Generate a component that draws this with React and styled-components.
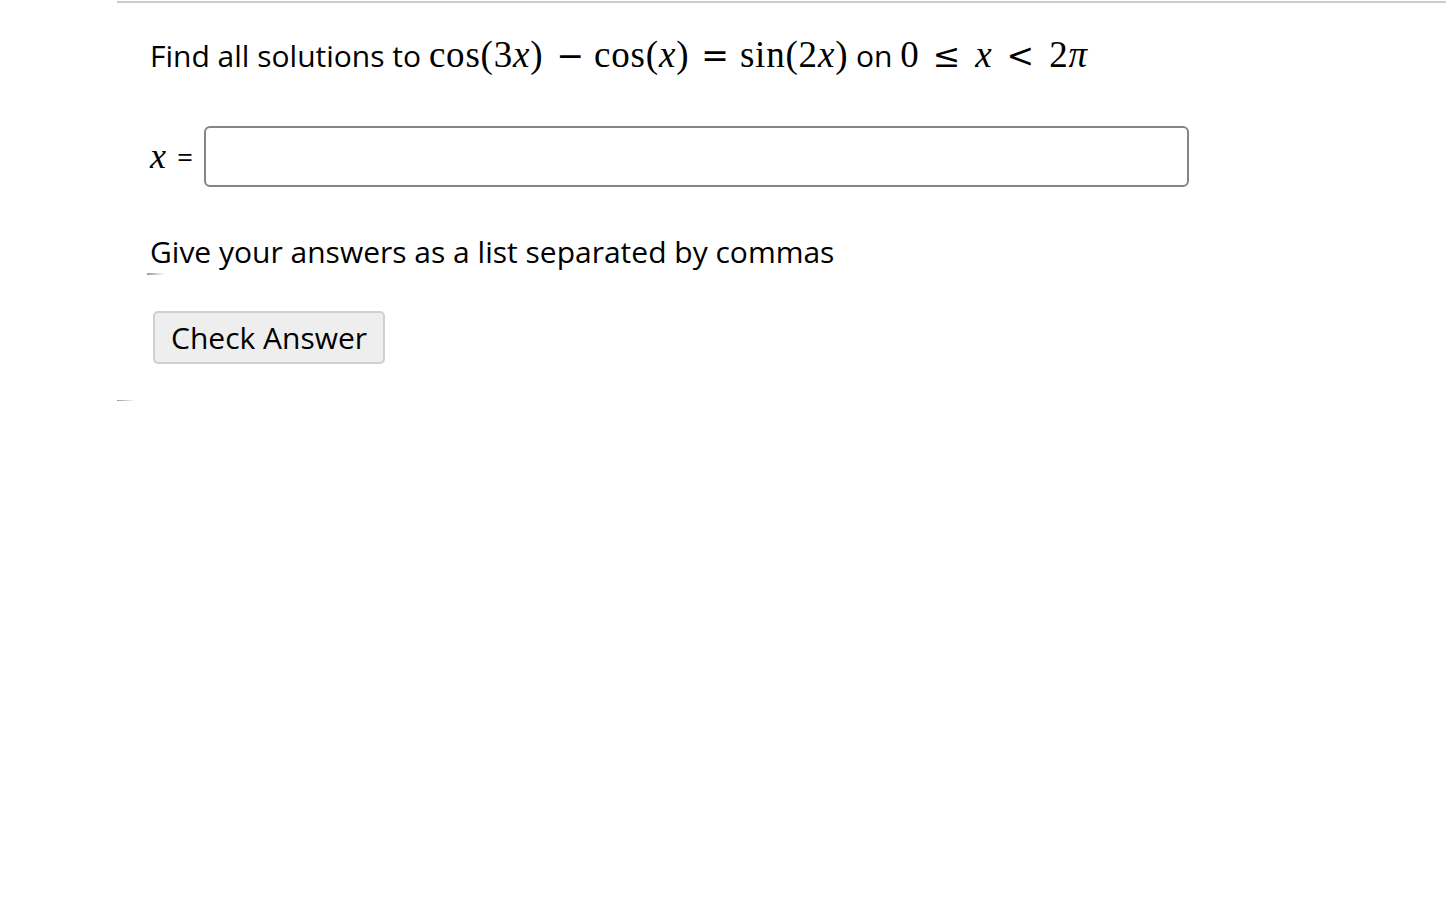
import React from "react";
import styled, { createGlobalStyle } from "styled-components";

const Global = createGlobalStyle`
  html, body { margin: 0; padding: 0; background: #fff; }
  body { font-family: "Open Sans", "Noto Sans", sans-serif; color: #000; }
`;

const Page = styled.div`
  margin-left: 117px;
  border-top: 2px solid #cdcdcd;
  margin-top: 1px;
  padding: 0 0 0 33px;
  position: relative;
  height: 398px;
`;

const Prompt = styled.p`
  margin: 0;
  padding-top: 32px;
  font-size: 30px;
  line-height: 40px;
  white-space: nowrap;
`;

const Math = styled.span`
  font-family: "Liberation Serif", "DejaVu Serif", serif;
  font-size: 37px;
  letter-spacing: 0.8px;
`;

const Var = styled.i`
  font-family: "Liberation Serif", "DejaVu Serif", serif;
  font-style: italic;
`;

const Op = styled.span`
  display: inline-block;
  font-family: "DejaVu Serif", "Liberation Serif", serif;
  font-size: 33px;
  letter-spacing: 0;
  margin: 0 ${(p) => p.$r}px 0 ${(p) => p.$l}px;
`;

const Row = styled.div`
  display: flex;
  align-items: center;
  margin-top: 49px;
  height: 62px;
`;

const Label = styled.label`
  font-size: 28px;
  width: 54px;
  flex: none;
  display: flex;
  align-items: center;
`;

const LabelVar = styled.i`
  font-family: "Liberation Serif", "DejaVu Serif", serif;
  font-size: 36px;
  font-style: italic;
  margin-right: 11px;
`;

const Input = styled.input`
  width: 985px;
  height: 61px;
  box-sizing: border-box;
  border: 2px solid #858585;
  border-radius: 6px;
  background: #fff;
  font-size: 26px;
  padding: 0 12px;
  font-family: "Open Sans", sans-serif;
`;

const Hint = styled.p`
  margin: 45px 0 0;
  font-size: 30px;
  line-height: 40px;
`;

const Fade = styled.div`
  position: absolute;
  height: 2px;
  width: 18px;
  background: linear-gradient(to right, #999, rgba(200, 200, 200, 0));
  left: ${(p) => p.$left}px;
  top: ${(p) => p.$top}px;
`;

const Button = styled.button`
  margin: 39px 0 0 3px;
  height: 53px;
  padding: 0 16px;
  font-family: "Open Sans", sans-serif;
  font-size: 30px;
  color: #000;
  background: #eeeeee;
  border: 2px solid #d0d0d0;
  border-radius: 5px;
`;

export default function App() {
  return (
    <>
      <Global />
      <Page>
        <Prompt>
          Find all solutions to{" "}
          <Math>
            cos(3<Var>x</Var>)<Op $l={13} $r={10}>−</Op>cos(<Var>x</Var>)<Op $l={12} $r={11}>=</Op>sin(2<Var>x</Var>)
          </Math>{" "}
          on{" "}
          <Math>
            0<Op $l={13} $r={15}>≤</Op><Var>x</Var><Op $l={14} $r={15}>&lt;</Op>2<Var>π</Var>
          </Math>
        </Prompt>
        <Row>
          <Label htmlFor="ans">
            <LabelVar>x</LabelVar>=
          </Label>
          <Input id="ans" type="text" />
        </Row>
        <Hint>Give your answers as a list separated by commas</Hint>
        <Fade $left={30} $top={270} />
        <Button type="button">Check Answer</Button>
        <Fade $left={0} $top={397} />
      </Page>
    </>
  );
}
